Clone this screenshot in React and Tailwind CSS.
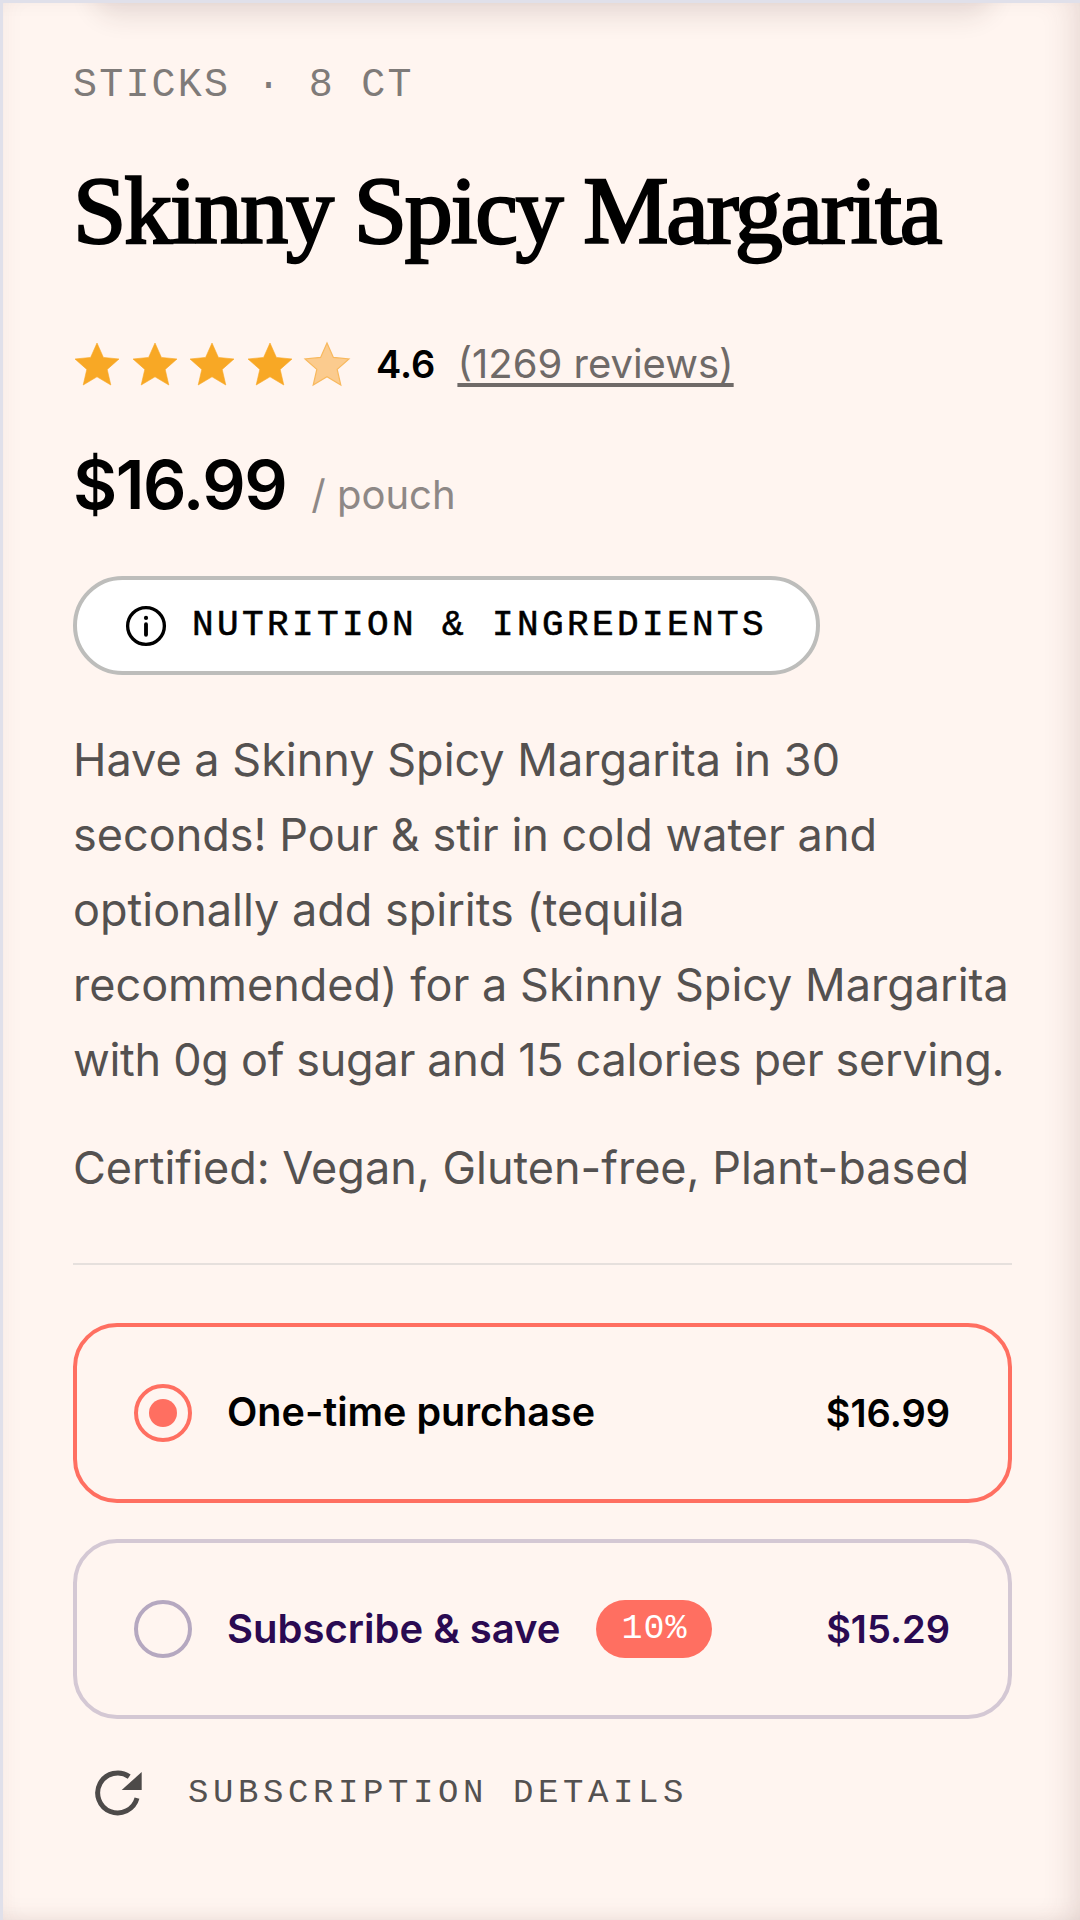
import React from "react";

const Star = ({ light }) => (
  <svg width="48" height="46" viewBox="0 0 24 23" className="block">
    <path
      d="M12 1 L15.2 8.2 L23 9 L17.1 14.2 L18.9 22 L12 17.9 L5.1 22 L6.9 14.2 L1 9 L8.8 8.2 Z"
      fill={light ? "#fbcb8e" : "#f8a825"}
      stroke={light ? "#f8b95e" : "#f8a825"}
      strokeWidth={light ? "0.6" : "0.3"}
    />
  </svg>
);

const Radio = ({ selected }) => (
  <span
    className={
      selected
        ? "flex h-[58px] w-[58px] shrink-0 items-center justify-center rounded-full border-[4px] border-[#ff6f61]"
        : "flex h-[58px] w-[58px] shrink-0 items-center justify-center rounded-full border-[4px] border-[#b5a8c0]"
    }
  >
    {selected && <span className="h-[28px] w-[28px] rounded-full bg-[#ff6f61]" />}
  </span>
);

export default function App() {
  return (
    <div className="relative h-[1920px] w-[1080px] overflow-hidden border-t-[3px] border-l-[3px] border-[#e0e0ea] bg-[#fff5f0] font-['Inter',sans-serif]">
      <div className="pointer-events-none absolute -top-[30px] left-[100px] h-[30px] w-[880px] rounded-full shadow-[0_4px_26px_10px_rgba(60,40,40,0.11)]" />
      <div className="pointer-events-none absolute inset-0 shadow-[inset_-22px_0_30px_-14px_rgba(90,50,50,0.13),inset_14px_0_24px_-14px_rgba(90,50,50,0.05),inset_0_-16px_24px_-14px_rgba(90,50,50,0.08)]" />
      <div className="flex w-[1009px] flex-col pl-[70px]">
        <p className="mt-[44px] font-['Liberation_Mono',monospace] text-[40px] leading-[78px] tracking-[2.2px] text-[#7f7b79]">
          STICKS · 8 CT
        </p>
        <h1 className="mt-[36px] whitespace-nowrap font-['Liberation_Serif',serif] text-[96px] leading-[100px] font-normal tracking-[-2.2px] text-black [-webkit-text-stroke:2.4px_black]">
          Skinny Spicy Margarita
        </h1>
        <div className="mt-[73px] flex h-[60px] items-center">
          <div className="flex gap-[9.5px]">
            <Star />
            <Star />
            <Star />
            <Star />
            <Star light />
          </div>
          <span className="ml-[25px] text-[38px] font-semibold text-black">4.6</span>
          <span className="ml-[22px] text-[40px] text-[#6f6a68] underline underline-offset-[5px]">(1269 reviews)</span>
        </div>
        <div className="mt-[50px] flex h-[80px] items-baseline">
          <span className="text-[68px] leading-[80px] font-semibold tracking-[-1.5px] text-black">$16.99</span>
          <span className="ml-[25px] text-[40px] text-[#8e8886]">/ pouch</span>
        </div>
        <button className="mt-[52px] flex h-[99px] w-[747px] items-center rounded-full border-[4px] border-[#bdbdbb] bg-white pl-[48px]">
          <svg width="42" height="42" viewBox="0 0 24 24" fill="none" stroke="#000" strokeWidth="1.9" strokeLinecap="round">
            <circle cx="12" cy="12" r="10.5" />
            <path d="M12 11v6" strokeWidth="2.2" />
            <circle cx="12" cy="7.4" r="1.2" fill="#000" stroke="none" />
          </svg>
          <span className="ml-[25px] font-['Liberation_Mono',monospace] text-[36px] tracking-[3.4px] text-black [-webkit-text-stroke:0.6px_black]">
            NUTRITION &amp; INGREDIENTS
          </span>
        </button>
        <p className="mt-[47px] whitespace-nowrap text-[45px] leading-[75px] text-[#545150]">
          Have a Skinny Spicy Margarita in 30
          <br />
          seconds! Pour &amp; stir in cold water and
          <br />
          optionally add spirits (tequila
          <br />
          recommended) for a Skinny Spicy Margarita
          <br />
          <span className="tracking-[-0.3px]">with 0g of sugar and 15 calories per serving.</span>
        </p>
        <p className="mt-[33px] whitespace-nowrap text-[45px] leading-[75px] text-[#545150]">Certified: Vegan, Gluten-free, Plant-based</p>
        <div className="mt-[58px] h-[2px] bg-[#e6e0dd]" />
        <div className="mt-[58px] flex h-[180px] items-center rounded-[44px] border-[4px] border-[#ff6f61] pr-[58px] pl-[57px]">
          <Radio selected />
          <span className="ml-[35px] text-[39.5px] font-semibold text-black">One-time purchase</span>
          <span className="ml-auto text-[38px] font-semibold text-black">$16.99</span>
        </div>
        <div className="mt-[36px] flex h-[180px] items-center rounded-[44px] border-[4px] border-[#d4c8d4] pr-[58px] pl-[57px]">
          <Radio />
          <span className="ml-[35px] text-[40px] font-semibold text-[#2a0a52]">Subscribe &amp; save</span>
          <span className="ml-[36px] flex h-[58px] w-[116px] items-center justify-center rounded-full bg-[#ff6f61] font-['Liberation_Mono',monospace] text-[35px] tracking-[1px] text-white">
            10%
          </span>
          <span className="ml-auto text-[38px] font-semibold text-[#2a0a52]">$15.29</span>
        </div>
        <div className="mt-[47px] flex h-[54px] items-center pl-[19px]">
          <svg width="54" height="54" viewBox="0 0 54 54" fill="none" className="shrink-0">
            <path d="M37.2 10.6A20 20 0 1 0 45 32.2" stroke="#4d4a49" strokeWidth="5" />
            <path d="M49.7 6v18H29.7z" fill="#4d4a49" />
          </svg>
          <span className="ml-[42px] font-['Liberation_Mono',monospace] text-[34px] tracking-[4.6px] text-[#545150]">
            SUBSCRIPTION DETAILS
          </span>
        </div>
      </div>
    </div>
  );
}
